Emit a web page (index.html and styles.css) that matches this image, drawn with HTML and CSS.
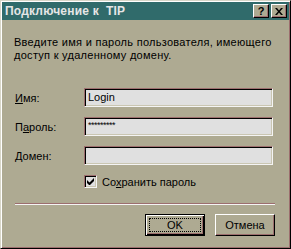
FILE: index.html
```html
<!DOCTYPE html>
<html lang="ru">
<head>
    <meta charset="utf-8" />
    <title>Подключение к TIP</title>
    <link rel="stylesheet" href="styles.css">
</head>
<body>
    <div class="window">
        <div class="titlebar">
            <span class="title">Подключение к &nbsp;TIP</span>
            <div class="controls">
                <span class="cbtn">?</span>
                <span class="cbtn cbtn-close">
                    <svg width="8" height="7" viewBox="0 0 8 7"><path d="M0 0h2l2 2.5L6 0h2L5 3.5 8 7H6L4 4.5 2 7H0l3-3.5z" fill="#000"/></svg>
                </span>
            </div>
        </div>
        <div class="content">
            <p class="intro">Введите имя и пароль пользователя, имеющего доступ к удаленному домену.</p>

            <div class="field">
                <label class="lbl" for="nombre"><u>И</u>мя:</label>
                <div class="input" id="nombre">Login</div>
            </div>
            <div class="field">
                <label class="lbl" for="pass">П<u>а</u>роль:</label>
                <div class="input input-pass" id="pass">*********</div>
            </div>
            <div class="field">
                <label class="lbl" for="dominio"><u>Д</u>омен:</label>
                <div class="input" id="dominio"></div>
            </div>

            <div class="check">
                <span class="box">
                    <svg width="7" height="7" viewBox="0 0 7 7"><path d="M0 2v3l2 2h1l4-4V0L2.5 4.5z" fill="#000"/></svg>
                </span>
                <span>Со<u>х</u>ранить пароль</span>
            </div>

            <div class="sep"></div>

            <div class="buttons">
                <div class="btn btn-default"><span class="focus">OK</span></div>
                <div class="btn">Отмена</div>
            </div>
        </div>
    </div>
</body>
</html>
```

FILE: styles.css
```css
*
{
    margin: 0;
    padding: 0;
    box-sizing: border-box;
}

body
{
    background: #aeaa92;
    font-family: "Liberation Sans", Arial, sans-serif;
    font-size: 11px;
    color: #000;
}

.window
{
    width: 291px;
    height: 249px;
    background: #aeaa92;
    border-top: 1px solid #d8d6c8;
    border-left: 1px solid #d8d6c8;
    border-right: 1px solid #000;
    border-bottom: 1px solid #000;
    box-shadow: inset 1px 1px #fff, inset -1px -1px #9c6e6e;
    padding: 1px;
}

.titlebar
{
    height: 18px;
    background: #306b6b;
    display: flex;
    align-items: center;
    justify-content: space-between;
    padding: 0 2px 0 3px;
}

.title
{
    color: #e6e6e6;
    font-weight: bold;
    font-size: 12px;
    letter-spacing: 0.2px;
    white-space: pre;
}

.controls
{
    display: flex;
    gap: 2px;
}

.cbtn
{
    width: 16px;
    height: 14px;
    background: #aeaa92;
    border-top: 1px solid #fff;
    border-left: 1px solid #fff;
    border-right: 1px solid #000;
    border-bottom: 1px solid #000;
    box-shadow: inset -1px -1px #9c6e6e;
    display: flex;
    align-items: center;
    justify-content: center;
    font-weight: bold;
    font-size: 11px;
    line-height: 1;
}

.content
{
    padding: 16px 14px 0 12px;
}

.intro
{
    line-height: 13px;
    letter-spacing: 0.28px;
    margin-bottom: 26px;
}

.field
{
    display: flex;
    align-items: center;
    height: 19px;
    margin-bottom: 10px;
}

.lbl
{
    width: 70px;
    padding-left: 1px;
}

.input
{
    width: 189px;
    height: 19px;
    background: #e0e0e0;
    border-top: 1px solid #9c6e6e;
    border-left: 1px solid #9c6e6e;
    border-right: 1px solid #f4f4f4;
    border-bottom: 1px solid #f4f4f4;
    box-shadow: inset 1px 1px #000, inset -1px -1px #cac6b2;
    padding: 2px 3px;
    line-height: 13px;
}

.input-pass
{
    font-size: 9px;
    letter-spacing: -0.5px;
    line-height: 9px;
    padding-top: 3px;
}

.check
{
    display: flex;
    align-items: center;
    gap: 5px;
    margin: 2px 0 0 70px;
}

.box
{
    width: 13px;
    height: 13px;
    background: #e0e0e0;
    border-top: 1px solid #9c6e6e;
    border-left: 1px solid #9c6e6e;
    border-right: 1px solid #f4f4f4;
    border-bottom: 1px solid #f4f4f4;
    box-shadow: inset 1px 1px #000, inset -1px -1px #cac6b2;
    display: flex;
    align-items: center;
    justify-content: center;
}

.sep
{
    height: 2px;
    margin: 15px 0 0 1px;
    border-top: 1px solid #9c6e6e;
    border-bottom: 1px solid #f4f4f4;
}

.buttons
{
    display: flex;
    justify-content: flex-end;
    gap: 10px;
    margin-top: 9px;
}

.btn
{
    width: 60px;
    height: 22px;
    background: #aeaa92;
    border-top: 1px solid #fff;
    border-left: 1px solid #fff;
    border-right: 1px solid #000;
    border-bottom: 1px solid #000;
    box-shadow: inset -1px -1px #9c6e6e;
    display: flex;
    align-items: center;
    justify-content: center;
}

.btn-default
{
    border: 1px solid #000;
    box-shadow: inset 1px 1px #fff, inset -1px -1px #000, inset -2px -2px #9c6e6e;
    padding: 3px;
}

.focus
{
    flex: 1;
    align-self: stretch;
    border: 1px dotted #000;
    display: flex;
    align-items: center;
    justify-content: center;
}
```
